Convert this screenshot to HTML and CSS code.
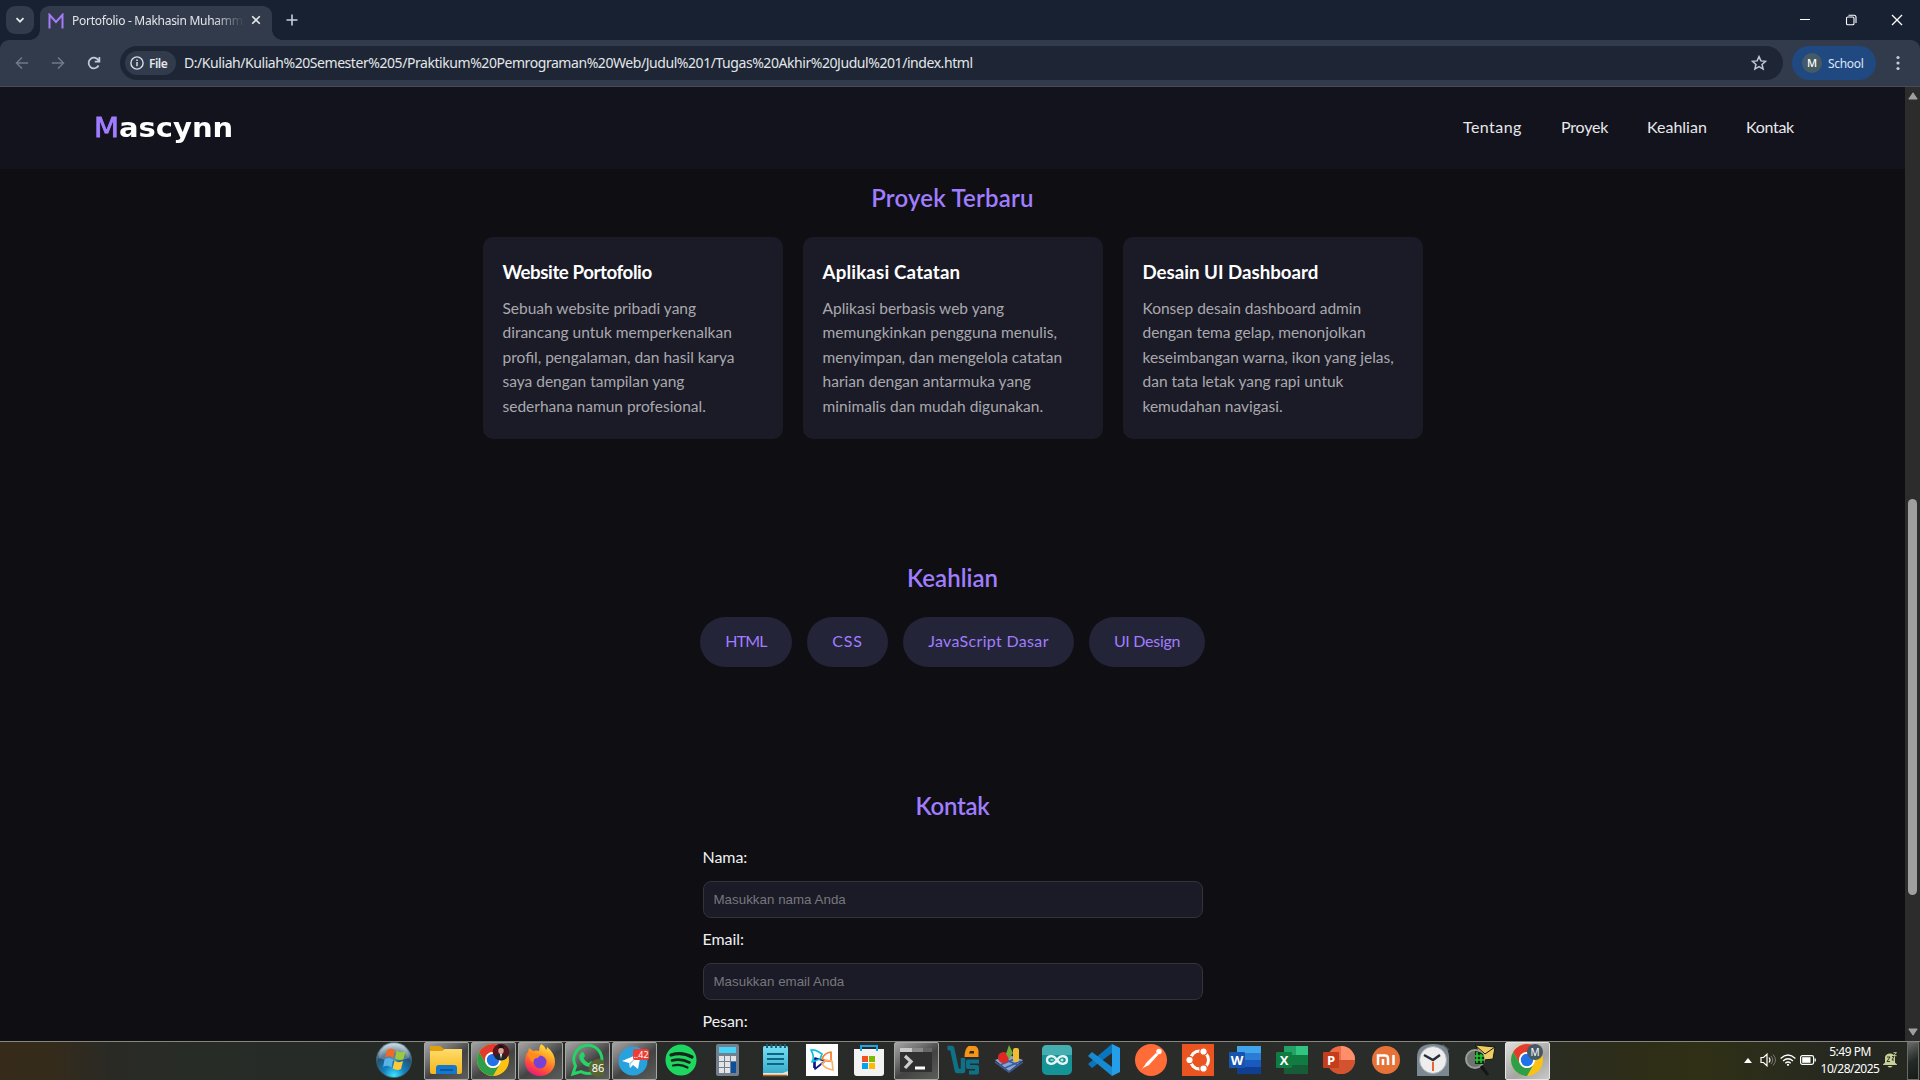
FILE: index.html
```html
<!DOCTYPE html>
<html lang="id">
<head>
<meta charset="utf-8">
<title>Portofolio - Makhasin Muhammad</title>
<link rel="stylesheet" href="styles.css">
</head>
<body>
<div class="desktop">

<div class="tabstrip">
  <div class="tab-search"><svg width="12" height="12" viewBox="0 0 12 12"><path d="M2.5 4.2L6 7.7l3.5-3.5" fill="none" stroke="#e3e6ea" stroke-width="1.8"/></svg></div>
  <div class="tab">
    <svg class="favicon" width="16" height="16" viewBox="0 0 16 16"><path d="M1.500 15.500V1.800L8 9 14.500 1.800V15.500" fill="none" stroke="#a47cf8" stroke-width="2"/></svg>
    <span class="tab-title">Portofolio - Makhasin Muhamm</span>
    <svg class="tab-close" width="10" height="10" viewBox="0 0 10 10"><path d="M1.200 1.200l7.600 7.600M8.800 1.200L1.200 8.800" stroke="#e3e6ea" stroke-width="1.600"/></svg>
  </div>
  <svg class="new-tab" width="12" height="12" viewBox="0 0 12 12"><path d="M6 .5v11M.5 6h11" stroke="#c6cfdc" stroke-width="1.600"/></svg>
  <div class="window-controls">
    <svg width="12" height="12" viewBox="0 0 12 12"><path d="M1 5.500h10" stroke="#fff"/></svg>
    <svg width="12" height="12" viewBox="0 0 12 12"><rect x="1.500" y="3" width="7.500" height="7.800" rx="1.300" fill="none" stroke="#fff" stroke-width="1.100"/><path d="M3.500 1.300H9a2 2 0 0 1 2 2V9" fill="none" stroke="#fff" stroke-width="1.100"/></svg>
    <svg width="12" height="12" viewBox="0 0 12 12"><path d="M1 1l10 10M11 1L1 11" stroke="#fff" stroke-width="1.300"/></svg>
  </div>
</div>

<div class="toolbar">
  <div class="nav-icons">
    <svg width="14" height="14" viewBox="0 0 14 14"><path d="M13.200 7H1.500M7 1.500L1.500 7 7 12.500" fill="none" stroke="#6f7a89" stroke-width="1.500"/></svg>
    <svg width="14" height="14" viewBox="0 0 14 14"><path d="M.8 7h11.700M7 1.500L12.500 7 7 12.500" fill="none" stroke="#6f7a89" stroke-width="1.500"/></svg>
    <svg width="14" height="14" viewBox="0 0 14 14"><path d="M11.600 9.500A5.300 5.300 0 1 1 11.800 5M12.400 1v4.600H7.800" fill="none" stroke="#c3ccd9" stroke-width="1.700"/></svg>
  </div>
  <div class="omnibox">
    <div class="file-chip"><svg width="14" height="14" viewBox="0 0 14 14"><circle cx="7" cy="7" r="6.100" fill="none" stroke="#d7dde5" stroke-width="1.400"/><path d="M7 6v4.300M7 3.400v1.500" stroke="#d7dde5" stroke-width="1.500"/></svg><span>File</span></div>
    <span class="url">D:/Kuliah/Kuliah%20Semester%205/Praktikum%20Pemrograman%20Web/Judul%201/Tugas%20Akhir%20Judul%201/index.html</span>
    <svg class="star" width="16" height="16" viewBox="0 0 16 16"><path d="M8 1.600l1.900 4.300 4.700.45-3.550 3.100 1.050 4.600L8 11.650l-4.100 2.400 1.050-4.600L1.400 6.350l4.700-.45z" fill="none" stroke="#c3c9d2" stroke-width="1.500"/></svg>
  </div>
  <div class="profile"><span class="avatar">M</span><span class="profile-name">School</span></div>
  <svg class="kebab" width="4" height="16" viewBox="0 0 4 16"><g fill="#c3ccd9"><circle cx="2" cy="2.500" r="1.600"/><circle cx="2" cy="8" r="1.600"/><circle cx="2" cy="13.500" r="1.600"/></g></svg>
</div>

<div class="viewport">
  <div class="page">
    <header class="site-header">
      <div class="logo"><span>M</span>ascynn</div>
      <nav><a class="n1">Tentang</a><a class="n2">Proyek</a><a class="n3">Keahlian</a><a class="n4">Kontak</a></nav>
    </header>
    <main>
      <section class="projects">
        <h2 class="h-projects">Proyek Terbaru</h2>
        <div class="cards">
          <article class="card c1"><h3>Website Portofolio</h3><p>Sebuah website pribadi yang<br>dirancang untuk memperkenalkan<br>profil, pengalaman, dan hasil karya<br>saya dengan tampilan yang<br>sederhana namun profesional.</p></article>
          <article class="card c2"><h3>Aplikasi Catatan</h3><p>Aplikasi berbasis web yang<br>memungkinkan pengguna menulis,<br>menyimpan, dan mengelola catatan<br>harian dengan antarmuka yang<br>minimalis dan mudah digunakan.</p></article>
          <article class="card c3"><h3>Desain UI Dashboard</h3><p>Konsep desain dashboard admin<br>dengan tema gelap, menonjolkan<br>keseimbangan warna, ikon yang jelas,<br>dan tata letak yang rapi untuk<br>kemudahan navigasi.</p></article>
        </div>
      </section>
      <section class="skills">
        <h2 class="h-skills">Keahlian</h2>
        <div class="pills"><span class="p1">HTML</span><span class="p2">CSS</span><span class="p3">JavaScript Dasar</span><span class="p4">UI Design</span></div>
      </section>
      <section class="contact">
        <h2 class="h-contact">Kontak</h2>
        <form>
          <label>Nama:</label><input type="text" placeholder="Masukkan nama Anda">
          <label>Email:</label><input type="text" placeholder="Masukkan email Anda">
          <label>Pesan:</label>
        </form>
      </section>
    </main>
  </div>
  <div class="scrollbar">
    <svg width="10" height="8" viewBox="0 0 10 8"><path d="M5 .8L9.200 7H.8z" fill="#9f9f9f" stroke="#9f9f9f" stroke-linejoin="round"/></svg>
    <div class="thumb"></div>
    <svg width="10" height="8" viewBox="0 0 10 8"><path d="M5 7.200L9.200 1H.8z" fill="#9f9f9f" stroke="#9f9f9f" stroke-linejoin="round"/></svg>
  </div>
</div>

<div class="taskbar">
  <div class="orb"><svg width="36" height="36" viewBox="0 0 36 36"><defs><radialGradient id="orb" cx=".5" cy=".95" r=".9"><stop offset="0" stop-color="#3de5ff"/><stop offset=".35" stop-color="#1380c0"/><stop offset=".7" stop-color="#235173"/><stop offset="1" stop-color="#b9cbd6"/></radialGradient></defs><circle cx="18" cy="18" r="17.500" fill="url(#orb)" stroke="#456b7e" stroke-width=".7"/><path d="M3 16a15 14 0 0 1 30 0q-15 6-30 0z" fill="#fff" opacity=".25"/><path d="M11 8q4-3 8 0l-1.500 8q-4-3-8.500-.5z" fill="#f06a28"/><path d="M20.500 8.500q4 3 9 .5l-2 8q-4 2-8.500-.5z" fill="#9bcb3c"/><path d="M8.500 17.500q4-3 8.700 0l-1.700 8q-4-3-8.300-.5z" fill="#58b4e8"/><path d="M18.500 18.500q4 3 8.500.5l-2 8q-4 2-8.300-.5z" fill="#fdc935"/></svg></div>
  <div class="tasks">
    <div class="task open"><svg width="34" height="34" viewBox="0 0 34 34"><defs><linearGradient id="fol" x2="0" y2="1"><stop stop-color="#ffdc6b"/><stop offset="1" stop-color="#f7b51a"/></linearGradient></defs><path d="M1 3h10l4 3h18v8H1z" fill="#dfa010"/><path d="M1 8h12l3-2h17v23q0 2-2 2H3q-2 0-2-2z" fill="url(#fol)"/><path d="M7 31v-6q0-3 3-3h15q3 0 3 3v6z" fill="#1478cd"/><path d="M11 27h13" stroke="#0a4f93" stroke-width="1.500"/></svg></div>
    <div class="task open"><svg width="34" height="34" viewBox="0 0 34 34"><g id="chrome"><circle cx="17" cy="17" r="16" fill="#fbc116"/><path d="M3.150 9A16 16 0 0 1 30.850 9H17A8 8 0 0 0 10.070 21z" fill="#e33b2e"/><path d="M3.150 9A16 16 0 0 0 17 33L23.930 21A8 8 0 0 1 10.070 21z" fill="#2c9f48"/><circle cx="17" cy="17" r="8" fill="#fff"/><circle cx="17" cy="17" r="6.200" fill="#1f72e8"/></g><circle cx="25" cy="9" r="8.300" fill="#56151c"/><ellipse cx="25" cy="7.500" rx="2.700" ry="3.500" fill="#d8a58d"/><path d="M22 6q0-4 3-4t3 4q-3-2-6 0z" fill="#15131a"/><path d="M19 15q1-4 6-4t6 4q-6 5-12 0z" fill="#1e2430"/><path d="M24 11h2l-1 5z" fill="#fff"/></svg></div>
    <div class="task open"><svg width="34" height="34" viewBox="0 0 34 34"><defs><linearGradient id="ff" x1=".8" y1="0" x2=".3" y2="1"><stop stop-color="#fff04a"/><stop offset=".4" stop-color="#ff9a22"/><stop offset=".75" stop-color="#ff4a3c"/><stop offset="1" stop-color="#e51587"/></linearGradient></defs><path d="M18 1q4 2 5 6 1-1 1-3 8 6 8 15a15 14 0 0 1-30 0Q2 12 5 9l1-4 4 3q4-1 6 0 0-4 2-7z" fill="url(#ff)"/><circle cx="17" cy="19" r="6.500" fill="#7841d6"/><path d="M4 11q2-2 6-1 3 1 7 2-1 3-5 3.500-2 1-1.500 4-3-1-4.500-5z" fill="#ff8a1f"/></svg></div>
    <div class="task open"><svg width="34" height="34" viewBox="0 0 34 34"><path d="M3 31l2.500-8A14 14 0 1 1 11 28.600z" fill="none" stroke="#25d366" stroke-width="3"/><path d="M11 10q2-2 3 0l1 3-1.500 2q2 4 5.500 5l2-2 3.500 2q0 4-5 4-7-1-10-8-1-4 1.500-6z" fill="#25d366"/><circle cx="28" cy="25" r="9" fill="#59652f"/><text x="28" y="29" text-anchor="middle" class="badge-text">86</text></svg></div>
    <div class="task open"><svg width="34" height="34" viewBox="0 0 34 34"><circle cx="16" cy="18" r="14.500" fill="#28a2dc"/><path d="M5 18L24 10 21 26l-5-4-3 3-1-5z" fill="#fff"/><path d="M12 20l9-7-7 8-1 4z" fill="#b6d5e8"/><rect x="16" y="6" width="16" height="11" rx="2" fill="#ef3d36"/><text x="24" y="15" text-anchor="middle" class="badge-small">..42</text></svg></div>
    <div class="task"><svg width="34" height="34" viewBox="0 0 34 34"><circle cx="17" cy="17" r="15.500" fill="#1ed760"/><g fill="none" stroke="#17251b" stroke-linecap="round"><path d="M7 12q11-3.500 21 2" stroke-width="3.200"/><path d="M8 17.500q9-2.500 17.500 2" stroke-width="2.600"/><path d="M9 22.500q8-2 14.500 2" stroke-width="2.200"/></g></svg></div>
    <div class="task"><svg width="34" height="34" viewBox="0 0 34 34"><rect x="5" y="1" width="23" height="32" rx="2" fill="#737f8c"/><rect x="8" y="4" width="17" height="6" fill="#45d5f7"/><g fill="#e2e4e6"><path d="M8 13h5v5H8zM14 13h5v5h-5zM20 13h5v5h-5zM8 19h5v5H8zM14 19h5v5h-5zM8 25h5v5H8zM14 25h5v5h-5z"/></g><path d="M20 19h5v11h-5z" fill="#0d4f9c"/></svg></div>
    <div class="task"><svg width="34" height="34" viewBox="0 0 34 34"><defs><linearGradient id="note" x2="0" y2="1"><stop stop-color="#77dff2"/><stop offset="1" stop-color="#35a9c9"/></linearGradient></defs><rect x="5" y="3" width="25" height="29" rx="1.500" fill="url(#note)"/><path d="M5 30h20l5-2v4q0 1-1 1H5z" fill="#e6e4df"/><path d="M5 32.500h24" stroke="#b05c19" stroke-width="1.500"/><path d="M9 11h17M9 16h17M9 21h17" stroke="#0c6785" stroke-width="1.800"/><path d="M9 1v4M13.500 1v4M18 1v4M22.500 1v4M27 1v4" stroke="#155f77" stroke-width="2"/></svg></div>
    <div class="task"><svg width="34" height="34" viewBox="0 0 34 34"><path fill="#fff" d="M1 1h32v32H1z"/><g fill="none" stroke-width="1.700" stroke-linejoin="round"><path d="M10 26L20 18 10 15z M9 25V19" stroke="#10178c"/><path d="M6 7q4-1 11 4l-2 5-8 3q3-5-1-12z" stroke="#0cc1dd"/><path d="M26 9v9q-4 1-9-2 2-6 9-7z" stroke="#f47a26"/><path d="M27 18l1 9q-7-1-11-6l4-4z" stroke="#f7b475"/></g></svg></div>
    <div class="task"><svg width="34" height="34" viewBox="0 0 34 34"><path d="M9 7V3h16v4" fill="none" stroke="#1ba4e8" stroke-width="2"/><path d="M2 6h30v24q0 3-3 3H5q-3 0-3-3z" fill="#f3f3f3"/><path d="M9 6v2M25 6v2" stroke="#1ba4e8" stroke-width="2"/><path fill="#f25022" d="M10 13h6v6h-6z"/><path fill="#7fba00" d="M17 13h6v6h-6z"/><path fill="#00a4ef" d="M10 20h6v6h-6z"/><path fill="#ffb900" d="M17 20h6v6h-6z"/></svg></div>
    <div class="task open"><svg width="34" height="34" viewBox="0 0 34 34"><rect x="1" y="5" width="32" height="24" rx="1" fill="#303031"/><path d="M1 5h12v4H1z" fill="#cacaca"/><path d="M13 5h11v4H13z" fill="#8a8a8a"/><path d="M24 5h9v4h-9z" fill="#666"/><path d="M6 13l6 5.500L6 25" fill="none" stroke="#ccc" stroke-width="3.300"/><path d="M16 25h10" stroke="#fff" stroke-width="3"/></svg></div>
    <div class="task"><svg width="34" height="34" viewBox="0 0 34 34"><g fill="none" stroke="#0e7187" stroke-width="4.500" stroke-linejoin="round"><path d="M1.500 5H6l5 23h6V15"/><path d="M33 18.500H22V24h9v5.500h-8" stroke-width="4"/></g><path d="M22.500 3H29q3.500 1 3.500 5.500V14H18.500q0-8 4-11z" fill="#f49517"/><path d="M24 8h4v2.500h-5z" fill="#292a27"/></svg></div>
    <div class="task"><svg width="34" height="34" viewBox="0 0 34 34"><path d="M2 17l14-5 14 5-14 11z" fill="#8ba5cf"/><path d="M2 19l14 10 14-10M7 22l17-7M12 25l16-7M8 15l17 7" fill="none" stroke="#3a5ca0" stroke-width="1.500"/><circle cx="10.500" cy="14.500" r="5.500" fill="#df2824"/><path d="M16 2l4 8-4 6-3-5z" fill="#70ad3c"/><rect x="20" y="5" width="6" height="14" rx="2" fill="#efbd35"/></svg></div>
    <div class="task"><svg width="34" height="34" viewBox="0 0 34 34"><rect x="2" y="2" width="30" height="30" rx="5" fill="#159497"/><path d="M2 12V7q0-5 5-5h20q5 0 5 5v5z" fill="#45aeb0"/><path d="M17 17c-4-6-10-4-10 0s6 6 10 0 10-4 10 0-6 6-10 0z" fill="none" stroke="#e6f4f3" stroke-width="2.300"/><path d="M10.500 17h3M20.500 17h3M22 15.500v3" stroke="#fff"/></svg></div>
    <div class="task"><svg width="34" height="34" viewBox="0 0 34 34"><path d="M25 1l8 4v24l-8 4z" fill="#249ee9"/><path d="M25 1L1 21l4 4 20-15z" fill="#0875be"/><path d="M5 9l20 15v9L1 13z" fill="#168bd1"/></svg></div>
    <div class="task"><svg width="34" height="34" viewBox="0 0 34 34"><circle cx="17" cy="17" r="16" fill="#ff6c37"/><path d="M12 20L22 10l2.500 1.500L15 22l-6 3-2 2 4-5z" fill="#fff"/><circle cx="25" cy="8.500" r="2.700" fill="#fff"/></svg></div>
    <div class="task"><svg width="34" height="34" viewBox="0 0 34 34"><path fill="#e95420" d="M1 1h32v32H1z"/><circle cx="18.500" cy="17" r="9" fill="none" stroke="#fff" stroke-width="3"/><g fill="#fff" stroke="#e95420" stroke-width="1.200"><circle cx="8.500" cy="17" r="3.700"/><circle cx="22.500" cy="8.500" r="3.700"/><circle cx="22.500" cy="25.500" r="3.700"/></g></svg></div>
    <div class="task"><svg width="34" height="34" viewBox="0 0 34 34"><path fill="#41a5ee" d="M9 3h24v7H9z"/><path fill="#2b7cd3" d="M9 10h24v7H9z"/><path fill="#185abd" d="M9 17h24v7H9z"/><path fill="#103f91" d="M9 24h24v7H9z"/><rect x="1" y="9" width="16" height="16" rx="1" fill="#1754b0"/><text x="9" y="22" text-anchor="middle" class="office">W</text></svg></div>
    <div class="task"><svg width="34" height="34" viewBox="0 0 34 34"><path fill="#21a366" d="M9 3h12v14H9z"/><path fill="#33c481" d="M21 3h12v9H21z"/><path fill="#107c41" d="M9 12h24v12H9z"/><path fill="#185c37" d="M9 22h24v9H9z"/><rect x="1" y="9" width="16" height="16" rx="1" fill="#107c41"/><text x="9" y="22" text-anchor="middle" class="office">X</text></svg></div>
    <div class="task"><svg width="34" height="34" viewBox="0 0 34 34"><circle cx="19" cy="17" r="14" fill="#ed6c47"/><path fill="#ff8f6b" d="M19 3a14 14 0 0 1 14 14H19z"/><path fill="#d35230" d="M5 17h28a14 14 0 0 1-28 0z"/><rect x="1" y="9" width="16" height="16" rx="1" fill="#c43e1c"/><text x="9" y="22" text-anchor="middle" class="office">P</text></svg></div>
    <div class="task"><svg width="34" height="34" viewBox="0 0 34 34"><circle cx="17" cy="17" r="14" fill="#e67238"/><path d="M9 22V12.500h7q3 0 3 3V22M14 16v6M24.500 12v10" fill="none" stroke="#fff" stroke-width="2.500"/></svg></div>
    <div class="task"><svg width="34" height="34" viewBox="0 0 34 34"><path d="M27 1l6 5-2 4-6-6z" fill="#555"/><path d="M1 33V14q0-13 16-13t16 13v19z" fill="#7b8791"/><circle cx="17" cy="17" r="13.500" fill="#eee" stroke="#a4adb5"/><path d="M8 12l9 5 7-5" fill="none" stroke="#263039" stroke-width="2.500"/><path d="M17 19v9" stroke="#ef632d" stroke-width="2"/></svg></div>
    <div class="task"><svg width="34" height="34" viewBox="0 0 34 34"><path d="M12 2l20 2-2 12-9 1z" fill="#f0cd60" stroke="#151515"/><path d="M12 2l10 9 10-7" fill="none" stroke="#151515"/><circle cx="12" cy="16" r="9" fill="#6d736e" stroke="#9a9e99" stroke-width="2"/><path d="M12 8q8 1 9 5v8h-9z" fill="#0a2d0c"/><path d="M14 9v11M18 11v9M12 13h9M12 17h9" stroke="#27cf35" stroke-width="1.500"/><path d="M18 23l7 9" stroke="#161616" stroke-width="3"/></svg></div>
    <div class="task open active"><svg width="34" height="34" viewBox="0 0 34 34"><use href="#chrome"/><circle cx="25" cy="9" r="8" fill="#455a64"/><text x="25" y="13" text-anchor="middle" class="badge-m">M</text></svg></div>
  </div>
  <div class="tray">
    <svg class="up" width="8" height="5" viewBox="0 0 8 5"><path d="M4 0l4 5H0z" fill="#fff"/></svg>
    <svg class="vol" width="16" height="14" viewBox="0 0 16 14"><path d="M1 4.500h2.500L7 1.200v11.600L3.500 9.500H1z" fill="none" stroke="#fff" stroke-width="1.200"/><path d="M9 4.500q2 2.500 0 5" fill="none" stroke="#fff" stroke-width="1.200"/><path d="M11 3q3.500 4 0 8M13 1.500q5 5.500 0 11" fill="none" stroke="#777b70"/></svg>
    <svg class="wifi" width="16" height="12" viewBox="0 0 16 12"><g fill="none" stroke="#fff" stroke-width="1.300"><path d="M.6 4.500q7.400-7 14.800 0M3 7q5-4.500 10 0M5.300 9.300q2.700-2.500 5.400 0"/></g><circle cx="8" cy="10.800" r="1.100" fill="#fff"/></svg>
    <svg class="bat" width="16" height="10" viewBox="0 0 16 10"><rect x=".6" y=".6" width="13" height="8.800" rx="1.800" fill="none" stroke="#fff" stroke-width="1.200"/><rect x="2.200" y="2.200" width="8.300" height="5.600" fill="#fff"/><path d="M15.200 3.500v3" stroke="#fff" stroke-width="1.300"/></svg>
    <div class="clock"><span>5:49 PM</span><span>10/28/2025</span></div>
    <svg class="bell" width="14" height="16" viewBox="0 0 14 16"><path d="M0 12.500l2-2V5q1-3.500 5-3.500t5 3.500v5.500l2 2v.5H0z" fill="#c8cf9b"/><path d="M4.500 14h5q-2.500 3-5 0z" fill="#c8cf9b"/><path d="M4 5h3L4 9.500h3M9 4.500h2L9 8h2" fill="none" stroke="#33391f"/><path d="M10.500.7h3l-3 3h3" fill="none" stroke="#c8cf9b"/></svg>
  </div>
  <div class="show-desktop"></div>
</div>
</div>
</body>
</html>
```

FILE: styles.css
```css
* { box-sizing: border-box; }
body { margin: 0; background: #0e0e13; font-family: Lato, sans-serif; overflow: hidden; }
svg { display: block; flex: none; }
.desktop { width: 1920px; height: 1080px; display: flex; flex-direction: column; overflow: hidden; background: #182131; }

/* browser chrome */
.tabstrip { height: 40px; flex: none; background: #182131; display: flex; align-items: flex-start; padding: 6px 17px 0 6px; font-family: "Noto Sans", sans-serif; }
.tab-search { width: 28px; height: 28px; border-radius: 9px; background: #323b4b; display: flex; align-items: center; justify-content: center; }
.tab { position: relative; width: 232px; height: 34px; margin-left: 6px; padding: 0 11px 4px 8px; background: #323b4b; border-radius: 9px 9px 0 0; display: flex; align-items: center; }
.tab::before, .tab::after { content: ""; position: absolute; bottom: 0; width: 10px; height: 10px; }
.tab::before { left: -10px; background: radial-gradient(circle at 0 0, transparent 9.5px, #323b4b 10px); }
.tab::after { right: -10px; background: radial-gradient(circle at 100% 0, transparent 9.5px, #323b4b 10px); }
.tab-title { margin-left: 8px; font-size: 12px; line-height: 16px; letter-spacing: -.28px; color: #e3e6ea; white-space: nowrap; mask-image: linear-gradient(90deg, #000 142px, rgba(0,0,0,.1) 168px); }
.tab-close { margin: 0 0 2px auto; }
.new-tab { margin: 8px 0 0 14px; }
.window-controls { margin: 8px 0 0 auto; display: flex; gap: 34px; }
.toolbar { height: 47px; flex: none; background: #323b4b; border-bottom: 1px solid #484c52; border-radius: 9px 9px 0 0; display: flex; align-items: center; font-family: "Noto Sans", sans-serif; padding: 0 20px 0 15px; }
.nav-icons { display: flex; gap: 22px; width: 105px; }
.omnibox { width: 1663px; height: 34px; border-radius: 17px; background: #1e2635; display: flex; align-items: center; padding: 0 16px 0 5px; }
.file-chip { width: 51px; height: 24px; border-radius: 12px; background: #323b4b; display: flex; align-items: center; gap: 5px; padding-left: 5px; font-size: 12px; font-weight: 600; letter-spacing: -.5px; color: #e3e6ea; }
.url { margin-left: 8px; font-size: 14px; line-height: 20px; letter-spacing: -.44px; color: #e3e6ea; white-space: nowrap; }
.star { margin-left: auto; }
.profile { width: 84px; height: 34px; margin-left: 9px; border-radius: 17px; background: #204982; display: flex; align-items: center; gap: 6px; padding-left: 10px; font-size: 12px; color: #dce6f7; }
.profile-name { letter-spacing: -.3px; }
.avatar { width: 20px; height: 20px; border-radius: 50%; background: #455a64; color: #fff; font-size: 11px; line-height: 20px; text-align: center; font-weight: 500; }
.kebab { margin-left: auto; }

/* web page */
.viewport { height: 954px; flex: none; display: flex; }
.page { width: 1905px; height: 954px; overflow: hidden; background: #0e0e13; }
.site-header { height: 82px; background: #13131e; display: flex; align-items: center; justify-content: space-between; padding: 0 110px 0 94px; }
.logo { font: bold 26px/32px "DejaVu Sans", sans-serif; color: #fff; transform: scaleX(1.115); transform-origin: 0 50%; }
.logo span { color: #a07dff; font-weight: normal; -webkit-text-stroke: .8px #a07dff; }
nav { display: flex; padding-bottom: 2px; }
nav a { font-size: 16px; line-height: 24px; color: #e8e8ea; white-space: nowrap; }
.n1 { width: 98px; letter-spacing: .45px; }
.n2 { width: 86px; letter-spacing: -.2px; }
.n3 { width: 99px; }
.n4 { width: 49px; letter-spacing: -.3px; }
h2 { margin: 0; text-align: center; font-size: 24px; line-height: 38px; font-weight: 600; color: #a07dff; }
.h-projects { letter-spacing: .2px; }
.h-contact { letter-spacing: -.3px; }
.projects { height: 390px; padding-top: 10px; }
.cards { display: flex; justify-content: center; gap: 20px; margin-top: 20px; }
.card { width: 300px; height: 202px; border-radius: 10px; background: #1b1b28; padding: 20px; white-space: nowrap; }
.card h3 { margin: 0 0 9px; font-size: 18.700px; line-height: 30px; font-weight: bold; color: #fff; }
.card.c1 h3 { letter-spacing: -.43px; }
.card.c2 h3 { letter-spacing: .18px; }
.card p { margin: 0; font-size: 15.500px; line-height: 24.480px; color: #a9a9ad; }
.card.c2 p { letter-spacing: .02px; }
.skills { height: 228px; }
.pills { display: flex; justify-content: center; gap: 15px; margin-top: 20px; }
.pills span { height: 50px; border-radius: 25px; background: #242438; line-height: 48px; text-align: center; font-size: 16px; color: #a07dff; white-space: nowrap; }
.pills .p1 { width: 92px; letter-spacing: -.8px; }
.pills .p2 { width: 81px; letter-spacing: .8px; }
.pills .p3 { width: 171px; letter-spacing: .33px; }
.pills .p4 { width: 116px; letter-spacing: -.3px; }
form { width: 500px; margin: 20px auto 0; }
label { display: block; height: 25px; line-height: 24px; font-size: 16px; letter-spacing: -.05px; color: #f0f0f2; }
input { display: block; width: 500px; height: 37px; margin: 11px 0 9px; padding: 0 10px 1px; border: 1px solid #333338; border-radius: 8px; background: #1b1b28; font: 13.333px "Liberation Sans", sans-serif; letter-spacing: .02px; }
input::placeholder { color: #77777b; }

.scrollbar { width: 15px; background: #2c2c2c; display: flex; flex-direction: column; align-items: center; padding: 5px 0; }
.thumb { width: 9px; height: 396px; border-radius: 5px; background: #9f9f9f; margin: 399px 0 auto; }

/* taskbar */
.taskbar { height: 39px; flex: none; display: flex; align-items: flex-start; border-top: 1px solid #85877f; background: linear-gradient(90deg, #362b1b 0, #352b1b 50px, #2a2a25 110px, #272c27 200px, #252a27 380px, #2a2b29 1000px, #292d29 1500px, #2e2d17 1640px, #303016 1700px, #252821 1850px, #252821); }
.orb { margin: 0 0 0 376px; width: 48px; }
.tasks { display: flex; gap: 2px; }
.task { width: 45px; height: 38px; display: flex; justify-content: center; padding: 1px 1px 0 0; }
.task.open { padding: 0 1px 0 0; border: 1px solid #a5a5a3; border-radius: 2px; background: linear-gradient(145deg, #a2a3a2 0, #737473 30%, #424342 55%, #5c5e5b 100%); }
.task.active { border-color: #e4e4e2; background: linear-gradient(145deg, #dededc, #a5a5a3 60%, #c9c9c7); }
.badge-text { font: 11px "Noto Sans", sans-serif; fill: #fff; }
.badge-small { font: 9px "Noto Sans", sans-serif; fill: #fff; }
.badge-m { font: 10px "Noto Sans", sans-serif; fill: #fff; }
.office { font: bold 13px "Open Sans", sans-serif; fill: #fff; }
.tray { margin-left: auto; height: 36px; display: flex; align-items: center; font-family: "Noto Sans", sans-serif; }
.vol, .wifi, .bat { margin-left: 4px; }
.vol { margin-left: 8px; }
.clock { width: 60px; margin-left: 4px; display: flex; flex-direction: column; align-items: center; font-size: 12px; line-height: 17px; letter-spacing: -.5px; color: #fff; white-space: nowrap; }
.bell { margin-left: 3px; }
.show-desktop { width: 12px; height: 38px; margin: 0 1px 0 10px; border: 1px solid #686b67; background: linear-gradient(150deg, #686a68, #242a26 50%, #151b17); }
```
